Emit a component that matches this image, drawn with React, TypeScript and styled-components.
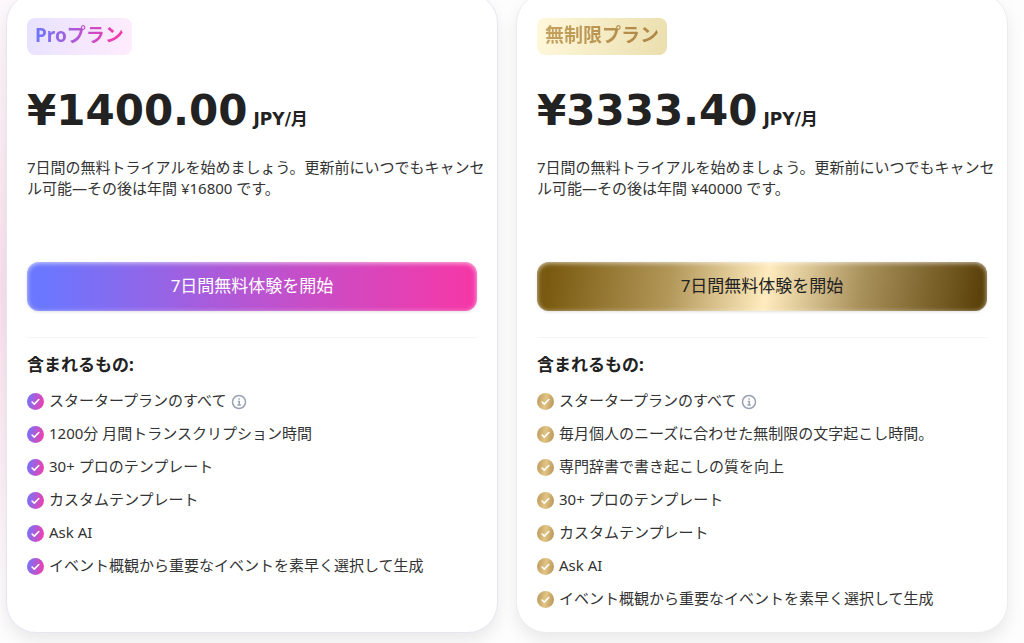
import React from 'react';
import styled, { createGlobalStyle } from 'styled-components';

type Tone = 'pro' | 'gold';

const GlobalStyle = createGlobalStyle`
  * { box-sizing: border-box; }
  body {
    margin: 0;
    overflow-x: hidden;
    color: #222;
    font-family: 'Noto Sans', 'Noto Sans CJK JP', sans-serif;
    font-size: 15px;
    line-height: 21px;
  }
  h2, h3, p, ul { margin: 0; padding: 0; }
`;

const Page = styled.main`
  overflow: hidden;
  padding: 0 16px 12px 6px;
  background: radial-gradient(ellipse 400px 340px at 0 290px, #fae0ef, #fefdfe 100%);
`;

const Plans = styled.div`
  display: grid;
  grid-template-columns: 1fr 1fr;
  gap: 18px;
  margin-top: -7px;
`;

const Card = styled.section<{ $tone: Tone }>`
  display: flex;
  flex-direction: column;
  align-items: stretch;
  padding: 24px 20px 22px;
  background: #fff;
  border: 1px solid ${(p) => (p.$tone === 'pro' ? '#e6e6f2' : '#ececf0')};
  border-radius: 30px;
  box-shadow: 0 8px 16px rgba(0, 0, 0, 0.08);
`;

const Badge = styled.h2<{ $tone: Tone }>`
  align-self: flex-start;
  height: 37px;
  padding: 0 8px;
  border-radius: 8px;
  font-size: 19px;
  line-height: 34px;
  background: ${(p) =>
    p.$tone === 'pro'
      ? 'linear-gradient(100deg, #e8e2ff, #ffecfd)'
      : 'linear-gradient(100deg, #fff8dc, #ebdfae)'};
`;

const BadgeText = styled.span<{ $tone: Tone }>`
  display: block;
  color: transparent;
  background: ${(p) =>
    p.$tone === 'pro'
      ? 'linear-gradient(90deg, #6b77ff, #ff35a2)'
      : 'linear-gradient(100deg, #c5a35f, #ad8444)'};
  background-clip: text;
`;

const Price = styled.p`
  display: flex;
  align-items: baseline;
  gap: 6px;
  margin-top: 28px;
  font-family: 'DejaVu Sans', 'Noto Sans CJK JP', sans-serif;
  font-weight: 700;
  font-size: 42px;
  line-height: 56px;
`;

const Unit = styled.span`
  font-size: 17px;
  line-height: 24px;
`;

const Description = styled.p`
  min-height: 80px;
  margin: 18px -16px 0 0;
  color: #333;
`;

const TrialButton = styled.button<{ $tone: Tone }>`
  height: 49px;
  margin-top: 25px;
  padding: 0 16px 2px;
  border: 0;
  border-radius: 12px;
  font: inherit;
  font-size: 17px;
  cursor: pointer;
  color: ${(p) => (p.$tone === 'pro' ? '#fff' : '#222')};
  background: ${(p) =>
    p.$tone === 'pro'
      ? 'linear-gradient(90deg, #6b77ff 4%, #b855d2 50%, #f538a8 98%)'
      : 'linear-gradient(98deg, #7a5a10 3%, #b3985a 30%, #ffebbe 51%, #a8905a 72%, #5c420a 98%)'};
  box-shadow: inset 0 1px 5px rgba(255, 255, 255, 0.7), 0 1px 3px rgba(0, 0, 0, 0.12);
`;

const Included = styled.div`
  margin-top: 26px;
  padding-top: 15px;
  border-top: 1px solid #f5f5f6;
`;

const IncludedTitle = styled.h3`
  font-size: 17px;
  line-height: 24px;
`;

const Features = styled.ul`
  display: grid;
  gap: 12px;
  margin: 13px 0 1px;
  list-style: none;
`;

const Feature = styled.li`
  display: flex;
  align-items: center;
  gap: 5px;
  color: #333;
`;

const Check = styled.span<{ $tone: Tone }>`
  display: grid;
  place-items: center;
  flex: none;
  width: 17px;
  height: 17px;
  margin-top: 2px;
  border-radius: 50%;
  background: ${(p) =>
    p.$tone === 'pro'
      ? 'linear-gradient(100deg, #6b77ff, #f93ba9)'
      : 'linear-gradient(100deg, #b9985b, #e2c584 50%, #b39053)'};
`;

const InfoButton = styled.button`
  display: flex;
  margin: 2px 0 0;
  padding: 0;
  border: 0;
  background: none;
  color: #99a1b3;
`;

const CheckIcon = ({ tone }: { tone: Tone }) => (
  <Check $tone={tone} aria-hidden="true">
    <svg width="17" height="17" viewBox="0 0 17 17" fill="none" stroke="#fff" strokeWidth="1.6" strokeLinecap="round" strokeLinejoin="round">
      <path d="M5.1 9 7.3 11.1 11.8 6.5" />
    </svg>
  </Check>
);

const InfoIcon = () => (
  <svg width="16" height="16" viewBox="0 0 16 16" fill="none" stroke="currentColor" strokeWidth="1.5">
    <circle cx="8" cy="8" r="6.5" />
    <path d="M6.8 7.5h1.5V11M6.4 11h3.4M7.4 5.1h1.4" />
  </svg>
);

interface Plan {
  tone: Tone;
  name: string;
  price: string;
  yearly: string;
  features: string[];
}

const plans: Plan[] = [
  {
    tone: 'pro',
    name: 'Proプラン',
    price: '¥1400.00',
    yearly: '¥16800',
    features: [
      'スタータープランのすべて',
      '1200分 月間トランスクリプション時間',
      '30+ プロのテンプレート',
      'カスタムテンプレート',
      'Ask AI',
      'イベント概観から重要なイベントを素早く選択して生成',
    ],
  },
  {
    tone: 'gold',
    name: '無制限プラン',
    price: '¥3333.40',
    yearly: '¥40000',
    features: [
      'スタータープランのすべて',
      '毎月個人のニーズに合わせた無制限の文字起こし時間。',
      '専門辞書で書き起こしの質を向上',
      '30+ プロのテンプレート',
      'カスタムテンプレート',
      'Ask AI',
      'イベント概観から重要なイベントを素早く選択して生成',
    ],
  },
];

const PlanCard = ({ plan }: { plan: Plan }) => (
  <Card $tone={plan.tone}>
    <Badge $tone={plan.tone}>
      <BadgeText $tone={plan.tone}>{plan.name}</BadgeText>
    </Badge>
    <Price>
      {plan.price}
      <Unit>JPY/月</Unit>
    </Price>
    <Description>
      {`7日間の無料トライアルを始めましょう。更新前にいつでもキャンセル可能—その後は年間 ${plan.yearly} です。`}
    </Description>
    <TrialButton $tone={plan.tone}>7日間無料体験を開始</TrialButton>
    <Included>
      <IncludedTitle>含まれるもの:</IncludedTitle>
      <Features>
        {plan.features.map((feature, index) => (
          <Feature key={feature}>
            <CheckIcon tone={plan.tone} />
            {feature}
            {index === 0 && (
              <InfoButton aria-label="詳細">
                <InfoIcon />
              </InfoButton>
            )}
          </Feature>
        ))}
      </Features>
    </Included>
  </Card>
);

export default function App() {
  return (
    <>
      <GlobalStyle />
      <Page lang="ja">
        <Plans>
          {plans.map((plan) => (
            <PlanCard key={plan.tone} plan={plan} />
          ))}
        </Plans>
      </Page>
    </>
  );
}
